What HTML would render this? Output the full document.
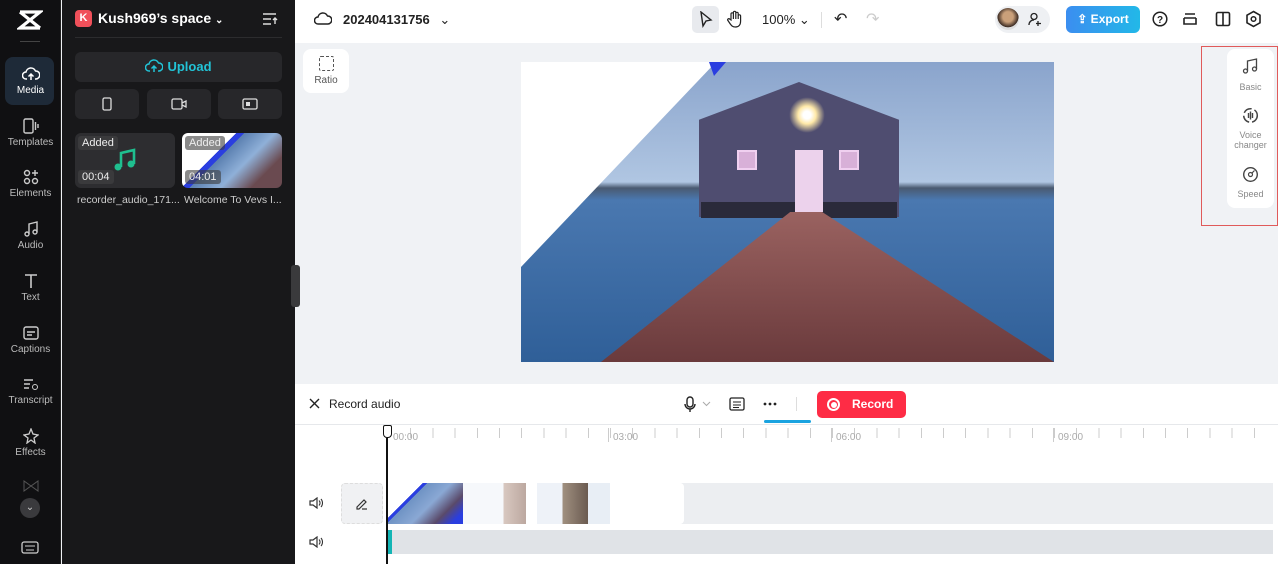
<!DOCTYPE html><html><head><style>
*{margin:0;padding:0;box-sizing:border-box}
body{width:1278px;height:564px;overflow:hidden;font-family:"Liberation Sans",sans-serif;position:relative;background:#f0f2f5}
.a{position:absolute}
.rail{left:0;top:0;width:61px;height:564px;background:#101012;border-right:1px solid #222}
.ri{position:absolute;left:0;width:61px;text-align:center;color:#bbb;font-size:10px}
.ri svg{display:block;margin:0 auto 3px}
.panel{left:62px;top:0;width:233px;height:564px;background:#18181a}
.btn{position:absolute;background:#27272a;border-radius:6px}
.top{left:295px;top:0;width:983px;height:43px;background:#fff}
</style></head><body>
<div class="a rail">
 <svg class="a" style="left:17px;top:9px" width="26" height="22" viewBox="0 0 26 22"><path d="M3 3h20L3 19h20M3 3l20 16" stroke="#fff" stroke-width="3.2" fill="none"/></svg>
 <div class="a" style="left:20px;top:41px;width:20px;height:1px;background:#444"></div>
 <div class="a" style="left:5px;top:57px;width:49px;height:48px;background:#1e2a38;border-radius:8px"></div>
 <div class="ri" style="top:66px;color:#fff">
 <svg width="18" height="16" viewBox="0 0 18 16"><path d="M5 13H4a3.5 3.5 0 010-7 5 5 0 019.5-1A3.5 3.5 0 0114 13h-1M9 14V8M6.5 10.5L9 8l2.5 2.5" stroke="#fff" stroke-width="1.5" fill="none"/></svg>Media</div>
 <div class="ri" style="top:118px"><svg width="16" height="16"><rect x="1" y="1" width="9" height="14" rx="1.5" stroke="#ccc" fill="none" stroke-width="1.4"/><path d="M12.5 4v8M15 6v4" stroke="#ccc" stroke-width="1.4"/></svg>Templates</div>
 <div class="ri" style="top:169px"><svg width="16" height="16"><circle cx="4" cy="4" r="2.5" stroke="#ccc" fill="none" stroke-width="1.4"/><path d="M12 1v6M9 4h6" stroke="#ccc" stroke-width="1.4"/><circle cx="4" cy="12" r="2.5" stroke="#ccc" fill="none" stroke-width="1.4"/><circle cx="12" cy="12" r="2.5" stroke="#ccc" fill="none" stroke-width="1.4"/></svg>Elements</div>
 <div class="ri" style="top:221px"><svg width="16" height="16"><path d="M6 13V3l8-2v10" stroke="#ccc" fill="none" stroke-width="1.4"/><circle cx="4" cy="13" r="2" stroke="#ccc" fill="none" stroke-width="1.4"/><circle cx="12" cy="11" r="2" stroke="#ccc" fill="none" stroke-width="1.4"/></svg>Audio</div>
 <div class="ri" style="top:273px"><svg width="16" height="16"><path d="M2 2h12M8 2v13" stroke="#ccc" stroke-width="1.6"/></svg>Text</div>
 <div class="ri" style="top:325px"><svg width="16" height="16"><rect x="1" y="2" width="14" height="12" rx="2" stroke="#ccc" fill="none" stroke-width="1.4"/><path d="M4 7h8M4 10h5" stroke="#ccc" stroke-width="1.4"/></svg>Captions</div>
 <div class="ri" style="top:376px"><svg width="16" height="16"><path d="M1 4h9M1 8h6M1 12h5" stroke="#ccc" stroke-width="1.4"/><circle cx="12" cy="11" r="2.5" stroke="#ccc" fill="none"/></svg>Transcript</div>
 <div class="ri" style="top:428px"><svg width="16" height="16"><path d="M8 1l2 5 5 1-4 3 1 5-4-3-4 3 1-5-4-3 5-1z" stroke="#ccc" fill="none" stroke-width="1.3"/></svg>Effects</div>
 <div class="ri" style="top:480px;color:#555"><svg width="16" height="12"><path d="M1 1v10l7-5 7 5V1L8 6z" stroke="#555" fill="none"/></svg></div>
 <div class="a" style="left:20px;top:498px;width:20px;height:20px;border-radius:50%;background:#3a3a3d;color:#ccc;font-size:10px;text-align:center;line-height:20px">⌄</div>
 <svg class="a" style="left:21px;top:541px" width="18" height="13"><rect x="1" y="1" width="16" height="11" rx="2" stroke="#ccc" fill="none" stroke-width="1.3"/><path d="M4 5h10M5 9h8" stroke="#ccc"/></svg>
</div>
<div class="a panel">
 <div class="a" style="left:13px;top:10px;width:17px;height:17px;background:#f0505a;border-radius:4px;color:#fff;font-weight:bold;font-size:11px;text-align:center;line-height:17px">K</div>
 <div class="a" style="left:36px;top:10px;color:#fff;font-weight:bold;font-size:14px">Kush969’s space <span style="font-size:10px">⌄</span></div>
 <svg class="a" style="left:200px;top:12px" width="16" height="14"><path d="M1 2h13M1 7h8M1 12h8M13 12V6M11 8l2-2 2 2" stroke="#ddd" stroke-width="1.4" fill="none"/></svg>
 <div class="a" style="left:13px;top:37px;width:207px;height:1px;background:#2c2c2e"></div>
 <div class="btn" style="left:13px;top:52px;width:207px;height:30px;color:#22c3d6;font-weight:bold;font-size:13px;text-align:center;line-height:30px"><svg width="18" height="14" style="vertical-align:-2px;margin-right:4px" viewBox="0 0 18 14"><path d="M5 12H4a3.5 3.5 0 010-7 5 5 0 019.5-1A3.5 3.5 0 0114 12h-1M9 13V7M6.5 9.5L9 7l2.5 2.5" stroke="#22c3d6" stroke-width="1.5" fill="none"/></svg>Upload</div>
 <div class="btn" style="left:13px;top:89px;width:64px;height:30px"><svg class="a" style="left:27px;top:8px" width="10" height="14"><rect x="1" y="1" width="8" height="12" rx="1.5" stroke="#ddd" fill="none" stroke-width="1.3"/></svg></div>
 <div class="btn" style="left:85px;top:89px;width:64px;height:30px"><svg class="a" style="left:24px;top:9px" width="16" height="12"><rect x="1" y="1" width="10" height="10" rx="1.5" stroke="#ddd" fill="none" stroke-width="1.3"/><path d="M11 5l4-2v6l-4-2" stroke="#ddd" fill="none" stroke-width="1.3"/></svg></div>
 <div class="btn" style="left:156px;top:89px;width:64px;height:30px"><svg class="a" style="left:24px;top:9px" width="16" height="12"><rect x="1" y="1" width="14" height="10" rx="1.5" stroke="#ddd" fill="none" stroke-width="1.3"/><rect x="4" y="4" width="4" height="4" fill="#ddd"/></svg></div>
 <div class="btn" style="left:13px;top:133px;width:100px;height:55px;background:#2d2d30"></div>
 <div class="a" style="left:16px;top:136px;background:#3a3a3c;color:#eee;font-size:11px;padding:1px 4px;border-radius:3px">Added</div>
 <div class="a" style="left:16px;top:170px;background:#3a3a3c;color:#eee;font-size:11px;padding:1px 4px;border-radius:3px">00:04</div>
 <svg class="a" style="left:51px;top:148px" width="24" height="24"><path d="M8 19V5l13-3v14" stroke="#1fbf8f" stroke-width="2.6" fill="none"/><circle cx="5" cy="19" r="3.5" fill="#1fbf8f"/><circle cx="18" cy="16" r="3.5" fill="#1fbf8f"/></svg>
 <div class="a" style="left:120px;top:133px;width:100px;height:55px;border-radius:6px;overflow:hidden;background:linear-gradient(135deg,#fff 35%,#2a3ee0 35%,#2a3ee0 40%,#5a7fb0 40%,#8fb0d8 60%,#6a4a50 80%)"></div>
 <div class="a" style="left:123px;top:136px;background:rgba(60,60,60,.6);color:#eee;font-size:11px;padding:1px 4px;border-radius:3px">Added</div>
 <div class="a" style="left:123px;top:170px;background:rgba(60,60,60,.6);color:#eee;font-size:11px;padding:1px 4px;border-radius:3px">04:01</div>
 <div class="a" style="left:15px;top:194px;color:#ccc;font-size:10.5px">recorder_audio_171...</div>
 <div class="a" style="left:122px;top:194px;color:#ccc;font-size:10.5px">Welcome To Vevs I...</div>
</div>
<div class="a" style="left:291px;top:265px;width:9px;height:42px;background:#3a3a3c;border-radius:3px"></div>
<div class="a top">
 <svg class="a" style="left:19px;top:12px" width="18" height="14" viewBox="0 0 18 14"><path d="M5 12H4a3.5 3.5 0 010-7 5 5 0 019.5-1A3.5 3.5 0 0114 12z" stroke="#222" stroke-width="1.5" fill="none"/></svg>
 <div class="a" style="left:48px;top:12px;font-size:13px;font-weight:bold;color:#222">202404131756 <span style="font-weight:normal;margin-left:6px">⌄</span></div>
 <div class="a" style="left:397px;top:6px;width:27px;height:27px;background:#e8eaee;border-radius:5px"></div>
 <svg class="a" style="left:404px;top:11px" width="14" height="17"><path d="M2 1l10 8-5 1-3 5z" stroke="#222" stroke-width="1.4" fill="none"/></svg>
 <svg class="a" style="left:432px;top:10px" width="16" height="18"><path d="M4 10V4a1.2 1.2 0 012.4 0v5V2.5a1.2 1.2 0 012.4 0V9V3.5a1.2 1.2 0 012.4 0V9V6a1.2 1.2 0 012.4 0v5c0 4-2 6-5 6s-4-1-6-4l-2-3a1.2 1.2 0 012-1z" stroke="#222" stroke-width="1.2" fill="none"/></svg>
 <div class="a" style="left:467px;top:12px;font-size:13px;color:#222">100% ⌄</div>
 <div class="a" style="left:526px;top:12px;width:1px;height:16px;background:#ddd"></div>
 <div class="a" style="left:539px;top:9px;font-size:16px;color:#222">↶</div>
 <div class="a" style="left:571px;top:9px;font-size:16px;color:#ccc">↷</div>
 <div class="a" style="left:700px;top:6px;width:55px;height:27px;background:#eef0f3;border-radius:14px"></div>
 <div class="a" style="left:702px;top:8px;width:22px;height:22px;border-radius:50%;background:radial-gradient(circle at 50% 40%,#caa07a 30%,#3a2a22 60%,#ddd 62%)"></div>
 <svg class="a" style="left:733px;top:12px" width="14" height="14"><circle cx="6" cy="4.5" r="3" stroke="#222" fill="none" stroke-width="1.3"/><path d="M1 13c0-3 2-5 5-5M10 9v5M8 11.5h5" stroke="#222" stroke-width="1.3" fill="none"/></svg>
 <div class="a" style="left:771px;top:6px;width:74px;height:27px;border-radius:6px;background:linear-gradient(90deg,#3b8ef0,#22b8e8);color:#fff;font-weight:bold;font-size:12px;line-height:27px;text-align:center">⇪ Export</div>
 <svg class="a" style="left:857px;top:11px" width="16" height="16"><circle cx="8" cy="8" r="6.8" stroke="#222" stroke-width="1.5" fill="none"/><text x="8" y="12" font-size="10" text-anchor="middle" font-family="Liberation Sans" font-weight="bold" fill="#222">?</text></svg>
 <svg class="a" style="left:887px;top:11px" width="16" height="16"><path d="M3 3h10M2 7h12M2 7v6h12V7" stroke="#222" stroke-width="1.6" fill="none"/></svg>
 <svg class="a" style="left:920px;top:11px" width="16" height="16"><rect x="1.5" y="1.5" width="13" height="13" rx="1.5" stroke="#222" stroke-width="1.6" fill="none"/><path d="M8 2v12" stroke="#222" stroke-width="1.6"/></svg>
 <svg class="a" style="left:950px;top:10px" width="17" height="18"><path d="M8.5 1.5l6.5 3.7v7.6L8.5 16.5 2 12.8V5.2z" stroke="#222" stroke-width="1.6" fill="none"/><circle cx="8.5" cy="9" r="2.3" stroke="#222" stroke-width="1.5" fill="none"/></svg>
</div>
<div class="a" style="left:303px;top:49px;width:46px;height:44px;background:#fff;border-radius:8px;text-align:center;font-size:10px;color:#555;padding-top:7px"><div style="width:15px;height:15px;border:1.3px dashed #555;margin:0 auto 4px;border-radius:2px"></div>Ratio</div>
<div class="a" style="left:521px;top:62px;width:533px;height:300px;overflow:hidden;background:linear-gradient(180deg,#8aa4cc 0%,#b0c6e2 40%,#4a5a70 42%,#4a78b0 46%,#2f5f98 100%)">
 <div class="a" style="left:178px;top:20px;width:200px;height:135px;background:#4f4d70;clip-path:polygon(50% 0,100% 28%,100% 100%,0 100%,0 28%)"></div>
 <div class="a" style="left:180px;top:140px;width:196px;height:16px;background:#2a2a3a"></div>
 <div class="a" style="left:216px;top:88px;width:20px;height:20px;background:#d8b0d8;border:2px solid #f0d0f0"></div>
 <div class="a" style="left:318px;top:88px;width:20px;height:20px;background:#d8b0d8;border:2px solid #f0d0f0"></div>
 <div class="a" style="left:274px;top:88px;width:28px;height:62px;background:#ecd2ec"></div>
 <div class="a" style="left:268px;top:35px;width:36px;height:36px;border-radius:50%;background:radial-gradient(#fff 15%,#ffe9a8 35%,rgba(255,240,180,0) 70%)"></div>
 <div class="a" style="left:0;top:150px;width:533px;height:150px;background:linear-gradient(180deg,#9a6260,#6a3a3c);clip-path:polygon(50.5% 0,56.5% 0,100% 100%,15% 100%)"></div>
 <div class="a" style="left:0;top:0;width:533px;height:300px;background:#fff;clip-path:polygon(0 0,195px 0,0 205px)"></div>
 <div class="a" style="left:0;top:0;width:533px;height:300px;background:#2a3ee0;clip-path:polygon(188px 0,205px 0,193px 14px)"></div>
</div>
<div class="a" style="left:1201px;top:46px;width:77px;height:180px;border:1px solid #e05a5a"></div>
<div class="a" style="left:1227px;top:49px;width:47px;height:159px;background:#fff;border-radius:8px;font-size:9px;color:#888;text-align:center;line-height:10px">
 <svg class="a" style="left:15px;top:9px" width="17" height="17"><path d="M5.5 13V3l9-2v10" stroke="#444" fill="none" stroke-width="1.3"/><circle cx="3.5" cy="13" r="2" stroke="#444" fill="none" stroke-width="1.3"/><circle cx="12.5" cy="11" r="2" stroke="#444" fill="none" stroke-width="1.3"/></svg><div class="a" style="left:0;width:47px;top:33px">Basic</div>
 <svg class="a" style="left:15px;top:58px" width="17" height="17"><circle cx="8.5" cy="8.5" r="6.8" stroke="#444" fill="none" stroke-width="1.5" stroke-dasharray="9 3"/><path d="M6.5 6v5M8.5 4.5v8M10.5 6v5" stroke="#444" stroke-width="1.4"/></svg><div class="a" style="left:0;width:47px;top:81px">Voice<br>changer</div>
 <svg class="a" style="left:15px;top:117px" width="17" height="17"><circle cx="8.5" cy="8.5" r="6.8" stroke="#444" fill="none" stroke-width="1.4"/><circle cx="8.5" cy="8.5" r="2" stroke="#444" fill="none" stroke-width="1.2"/><path d="M9.5 7.5l3-3" stroke="#444" stroke-width="1.2"/></svg><div class="a" style="left:0;width:47px;top:140px">Speed</div>
</div>
<div class="a" style="left:295px;top:384px;width:983px;height:180px;background:#fff"></div>
<div class="a" style="left:295px;top:424px;width:983px;height:1px;background:#e6e8eb"></div>
<svg class="a" style="left:309px;top:398px" width="11" height="11"><path d="M1 1l9 9M10 1l-9 9" stroke="#222" stroke-width="1.4"/></svg>
<div class="a" style="left:329px;top:397px;font-size:12px;color:#222">Record audio</div>
<svg class="a" style="left:683px;top:396px" width="14" height="17"><rect x="4" y="1" width="6" height="10" rx="3" stroke="#222" fill="none" stroke-width="1.4"/><path d="M2 8a5 5 0 0010 0M7 13v3" stroke="#222" stroke-width="1.4" fill="none"/></svg>
<svg class="a" style="left:702px;top:401px" width="9" height="6"><path d="M1 1l3.5 3.5L8 1" stroke="#aaa" fill="none"/></svg>
<svg class="a" style="left:729px;top:397px" width="16" height="14"><rect x="1" y="1" width="14" height="12" rx="1.5" stroke="#222" fill="none" stroke-width="1.3"/><path d="M4 5h8M4 8h8M4 10.5h6" stroke="#222"/></svg>
<svg class="a" style="left:763px;top:402px" width="14" height="4"><circle cx="2" cy="2" r="1.4" fill="#222"/><circle cx="7" cy="2" r="1.4" fill="#222"/><circle cx="12" cy="2" r="1.4" fill="#222"/></svg>
<div class="a" style="left:796px;top:397px;width:1px;height:14px;background:#ddd"></div>
<div class="a" style="left:764px;top:420px;width:47px;height:3px;background:#1aa3e0;border-radius:2px"></div>
<div class="a" style="left:817px;top:391px;width:89px;height:27px;background:#fe2c45;border-radius:5px;color:#fff;font-weight:bold;font-size:12px;line-height:27px"><span style="position:absolute;left:10px;top:7px;width:13px;height:13px;border:2px solid #fff;border-radius:50%"><span style="position:absolute;left:1.5px;top:1.5px;width:6px;height:6px;background:#fff;border-radius:50%"></span></span><span style="position:absolute;left:35px">Record</span></div>
<div class="a" style="left:388px;top:428px;width:885px;height:10px;background:repeating-linear-gradient(90deg,#ccc 0 1px,transparent 1px 22.2px)"></div>
<div class="a" style="left:393px;top:432px;font-size:10px;color:#aaa">00:00</div>
<div class="a" style="left:608px;top:428px;width:1px;height:14px;background:#ccc"></div><div class="a" style="left:613px;top:432px;font-size:10px;color:#aaa">03:00</div>
<div class="a" style="left:831px;top:428px;width:1px;height:14px;background:#ccc"></div><div class="a" style="left:836px;top:432px;font-size:10px;color:#aaa">06:00</div>
<div class="a" style="left:1053px;top:428px;width:1px;height:14px;background:#ccc"></div><div class="a" style="left:1058px;top:432px;font-size:10px;color:#aaa">09:00</div>
<div class="a" style="left:386px;top:438px;width:2px;height:126px;background:#111"></div>
<div class="a" style="left:383px;top:425px;width:9px;height:13px;border:1.5px solid #111;border-radius:2px 2px 4px 4px;background:#fff"></div>
<div class="a" style="left:388px;top:483px;width:885px;height:41px;background:#eceef1"></div>
<div class="a" style="left:388px;top:483px;width:75px;height:41px;background:linear-gradient(135deg,#fff 30%,#2a3ee0 30%,#2a3ee0 34%,#6f93c4 34%,#8aa8d4 55%,#5a4a6a 75%,#2a3ee0 90%)"></div>
<div class="a" style="left:463px;top:483px;width:74px;height:41px;background:linear-gradient(90deg,#f6f8fb 55%,#d8c8c0 55%,#bca8a0 85%,#fff 85%)"></div>
<div class="a" style="left:537px;top:483px;width:73px;height:41px;background:linear-gradient(90deg,#eef2f8 35%,#a09080 35%,#6a5a50 70%,#e8eef5 70%)"></div>
<div class="a" style="left:610px;top:483px;width:74px;height:41px;background:#fff;border-radius:0 4px 4px 0"></div>
<div class="a" style="left:341px;top:483px;width:42px;height:41px;background:#f0f1f3;border:1px dashed #ddd;border-radius:4px"></div>
<svg class="a" style="left:355px;top:497px" width="13" height="13"><path d="M2 10l7-7 2 2-7 7H2zM7 12h5" stroke="#333" stroke-width="1.2" fill="none"/></svg>
<svg class="a" style="left:309px;top:497px" width="14" height="12"><path d="M1 4h3l4-3v10L4 8H1z" stroke="#333" stroke-width="1.2" fill="none"/><path d="M10 3.5a3.5 3.5 0 010 5M12 2a6 6 0 010 8" stroke="#333" stroke-width="1.1" fill="none"/></svg>
<svg class="a" style="left:309px;top:536px" width="14" height="12"><path d="M1 4h3l4-3v10L4 8H1z" stroke="#333" stroke-width="1.2" fill="none"/><path d="M10 3.5a3.5 3.5 0 010 5M12 2a6 6 0 010 8" stroke="#333" stroke-width="1.1" fill="none"/></svg>
<div class="a" style="left:388px;top:530px;width:885px;height:24px;background:#e0e3e7"></div>
<div class="a" style="left:388px;top:530px;width:4px;height:24px;background:#13b5b5"></div>
</body></html>
